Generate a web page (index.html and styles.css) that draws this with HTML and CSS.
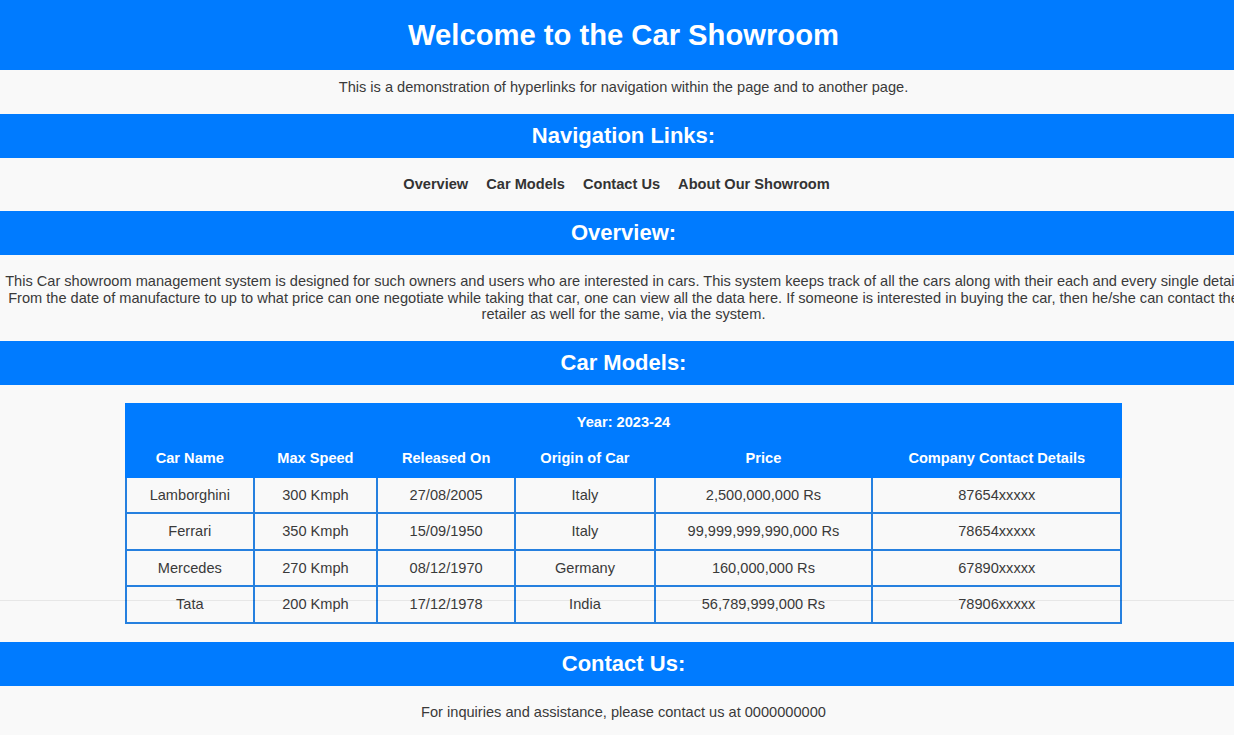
FILE: index.html
```html
<!DOCTYPE html>
<html lang="en">
<head>
<meta charset="utf-8">
<title>Car Showroom</title>
<link rel="stylesheet" href="styles.css">
</head>
<body>
<div class="page">
  <header class="site-header">
    <h1>Welcome to the Car Showroom</h1>
  </header>
  <p class="intro">This is a demonstration of hyperlinks for navigation within the page and to another page.</p>

  <section class="section">
    <h2 class="bar">Navigation Links:</h2>
    <nav class="nav"><a href="#overview">Overview</a> <a href="#models">Car Models</a> <a href="#contact">Contact Us</a> <a href="#about">About Our Showroom</a></nav>
  </section>

  <section class="section" id="overview">
    <h2 class="bar">Overview:</h2>
    <p class="text overview-text">This Car showroom management system is designed for such owners and users who are interested in cars. This system keeps track of all the cars along with their each and every single detail. From the date of manufacture to up to what price can one negotiate while taking that car, one can view all the data here. If someone is interested in buying the car, then he/she can contact the retailer as well for the same, via the system.</p>
  </section>

  <section class="section" id="models">
    <h2 class="bar">Car Models:</h2>
    <div class="table-wrap">
      <table class="cars">
        <thead>
          <tr><th colspan="6">Year: 2023-24</th></tr>
          <tr><th>Car Name</th><th>Max Speed</th><th>Released On</th><th>Origin of Car</th><th>Price</th><th>Company Contact Details</th></tr>
        </thead>
        <tbody>
          <tr><td>Lamborghini</td><td>300 Kmph</td><td>27/08/2005</td><td>Italy</td><td>2,500,000,000 Rs</td><td>87654xxxxx</td></tr>
          <tr><td>Ferrari</td><td>350 Kmph</td><td>15/09/1950</td><td>Italy</td><td>99,999,999,990,000 Rs</td><td>78654xxxxx</td></tr>
          <tr><td>Mercedes</td><td>270 Kmph</td><td>08/12/1970</td><td>Germany</td><td>160,000,000 Rs</td><td>67890xxxxx</td></tr>
          <tr><td>Tata</td><td>200 Kmph</td><td>17/12/1978</td><td>India</td><td>56,789,999,000 Rs</td><td>78906xxxxx</td></tr>
        </tbody>
      </table>
    </div>
  </section>

  <section class="section" id="contact">
    <h2 class="bar">Contact Us:</h2>
    <p class="text contact-text">For inquiries and assistance, please contact us at 0000000000</p>
  </section>
</div>
<div class="divider-line"></div>
</body>
</html>
```
FILE: styles.css
```css
html {
  overflow: hidden;
}

body {
  margin: 0;
  background: #f9f9f9;
  color: #3a3a3a;
  font-family: "Liberation Sans", Arial, sans-serif;
  font-size: 14.6px;
}

.page {
  width: 1247px;
}

.site-header {
  background: #007bff;
  color: #fff;
  text-align: center;
  padding: 18px 0;
}

.site-header h1 {
  margin: 0;
  font-size: 29.2px;
  line-height: 34px;
  font-weight: bold;
}

.intro {
  margin: 0;
  padding: 9px 0 19px;
  text-align: center;
  line-height: 16px;
}

.section {
  margin: 0;
}

.bar {
  margin: 0;
  background: #007bff;
  color: #fff;
  text-align: center;
  font-size: 22px;
  line-height: 24px;
  padding: 10px 0;
  font-weight: bold;
}

.nav {
  text-align: center;
  padding: 18px 0 19px;
  line-height: 16px;
}

.nav a {
  color: #333;
  font-weight: bold;
  text-decoration: none;
  margin-right: 14px;
}

.text {
  margin: 0;
  text-align: center;
  padding: 18px 4px 18px;
}

.overview-text {
  line-height: 16.5px;
}

.contact-text {
  padding-bottom: 14px;
}

.table-wrap {
  padding: 18px 0;
}

.cars {
  width: 80%;
  margin: 0 auto;
  border-collapse: collapse;
  border: 2px solid #2680df;
}

.cars th,
.cars td {
  padding: 9px 10px;
  text-align: center;
  line-height: 16.5px;
}

.cars th {
  background: #007bff;
  color: #fff;
  font-weight: bold;
  border: 2px solid #007bff;
}

.cars td {
  border: 2px solid #2680df;
}

.divider-line {
  position: fixed;
  left: 0;
  right: 0;
  top: 600px;
  height: 1px;
  background: rgba(0, 0, 0, 0.07);
  pointer-events: none;
}
```
